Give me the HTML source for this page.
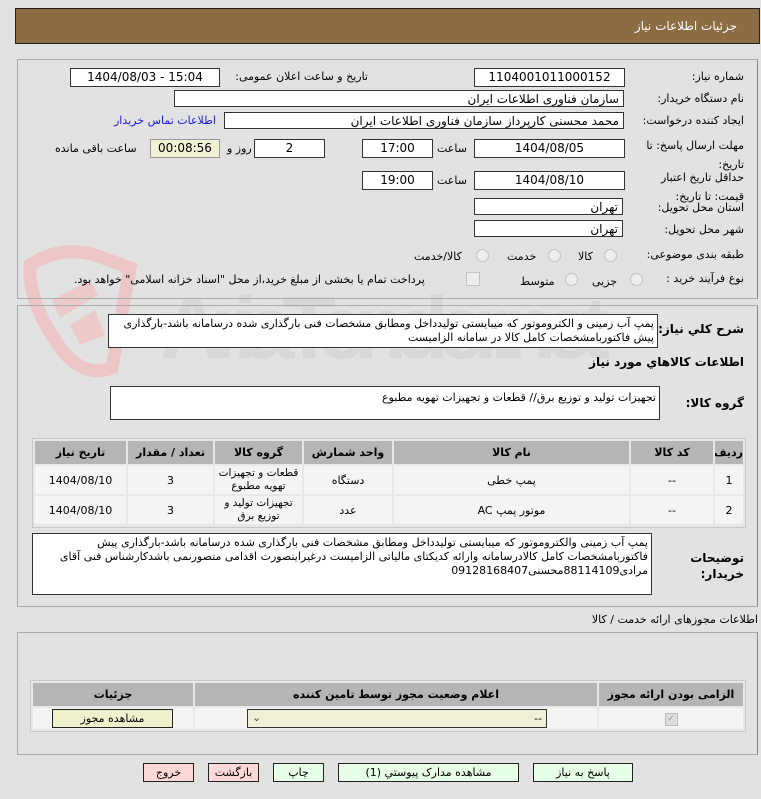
<!DOCTYPE html>
<html><head><meta charset="utf-8">
<style>
body{margin:0;width:761px;height:799px;background:#e2e2e2;font-family:Tahoma,"DejaVu Sans","Liberation Sans",sans-serif;font-size:11px;color:#000;position:relative;overflow:hidden}
.a{position:absolute}
.hdr{left:15px;top:8px;width:743px;height:34px;background:#8c6c42;border:1px solid #222;}
.hdr span{position:absolute;right:22px;top:10px;color:#fff;font-size:12px}
.pnl{border:1px solid #a9a9a9;border-right-color:#888;}
.box{background:#fff;border:1px solid #333;height:17px;line-height:17px;text-align:center;font-size:12px;overflow:hidden;white-space:nowrap}
.bl{text-align:right;padding-right:4px;box-sizing:border-box;direction:rtl}
.lbl{direction:rtl;text-align:right;white-space:nowrap}
.ta{background:#fff;border:1px solid #333;direction:rtl;text-align:right;padding:2px 3px;box-sizing:border-box;line-height:14px;font-size:11px;overflow:hidden}
.rd{width:11px;height:11px;border-radius:50%;border:1px solid #c4c4c4;background:#eee}
table{border-collapse:separate;border-spacing:2px;direction:rtl;table-layout:fixed}
td,th{text-align:center;font-size:11px;overflow:hidden;padding:0}
th{background:#b5b5b5;font-weight:bold;height:23px}
td{background:#f4f4f4}
.btn{border:1px solid #222;height:17px;line-height:17px;text-align:center;font-size:11px;direction:rtl}
</style></head><body>
<svg class="a" style="left:0;top:240px" width="640" height="150">
<path d="M30 25 Q60 5 95 15 L130 28 L112 128 Q80 140 55 100 Q28 60 30 25 Z" fill="none" stroke="#ecc6c6" stroke-width="13"/>
<path d="M52 60 L90 40 L98 55 L60 78 Z M70 85 L95 70 L105 95 L80 105 Z" fill="#eccaca"/>
<text x="160" y="118" font-family="Liberation Sans" font-weight="bold" font-size="88" fill="#cfcfcf" opacity="0.55" textLength="450">AriaTender.net</text>
</svg>

<div class="a hdr"><span>جزئیات اطلاعات نیاز</span></div>

<div class="a pnl" style="left:17px;top:59px;width:739px;height:238px"></div>
<div class="a pnl" style="left:17px;top:305px;width:739px;height:300px"></div>

<div class="a lbl" style="right:17px;top:70px">شماره نیاز:</div>
<div class="a box" style="left:474px;top:68px;width:149px">1104001011000152</div>
<div class="a lbl" style="right:393px;top:70px">تاریخ و ساعت اعلان عمومی:</div>
<div class="a box" style="left:70px;top:68px;width:148px">1404/08/03 - 15:04</div>

<div class="a lbl" style="right:17px;top:92px">نام دستگاه خریدار:</div>
<div class="a box bl" style="left:174px;top:90px;width:450px">سازمان فناوری اطلاعات ایران</div>

<div class="a lbl" style="right:17px;top:114px">ایجاد کننده درخواست:</div>
<div class="a box bl" style="left:224px;top:112px;width:400px">محمد محسنی کارپرداز سازمان فناوری اطلاعات ایران</div>
<div class="a lbl" style="left:114px;top:114px;color:#1a1ae0">اطلاعات تماس خریدار</div>

<div class="a lbl" style="right:17px;top:136px;line-height:19px">مهلت ارسال پاسخ: تا<br>تاریخ:</div>
<div class="a box" style="left:474px;top:139px;width:149px">1404/08/05</div>
<div class="a lbl" style="left:437px;top:142px">ساعت</div>
<div class="a box" style="left:362px;top:139px;width:69px">17:00</div>
<div class="a box" style="left:254px;top:139px;width:69px">2</div>
<div class="a lbl" style="left:227px;top:142px">روز و</div>
<div class="a box" style="left:150px;top:139px;width:68px;background:#f0f0d2;border-color:#999">00:08:56</div>
<div class="a lbl" style="left:55px;top:142px">ساعت باقی مانده</div>

<div class="a lbl" style="right:17px;top:168px;line-height:19px">حداقل تاریخ اعتبار<br>قیمت: تا تاریخ:</div>
<div class="a box" style="left:474px;top:171px;width:149px">1404/08/10</div>
<div class="a lbl" style="left:437px;top:174px">ساعت</div>
<div class="a box" style="left:362px;top:171px;width:69px">19:00</div>

<div class="a lbl" style="right:17px;top:201px">استان محل تحویل:</div>
<div class="a box bl" style="left:474px;top:198px;width:149px">تهران</div>
<div class="a lbl" style="right:17px;top:223px">شهر محل تحویل:</div>
<div class="a box bl" style="left:474px;top:220px;width:149px">تهران</div>

<div class="a lbl" style="right:17px;top:248px">طبقه بندی موضوعی:</div>
<div class="a rd" style="left:604px;top:249px"></div><div class="a lbl" style="left:578px;top:250px">کالا</div>
<div class="a rd" style="left:548px;top:249px"></div><div class="a lbl" style="left:507px;top:250px">خدمت</div>
<div class="a rd" style="left:476px;top:249px"></div><div class="a lbl" style="left:414px;top:250px">کالا/خدمت</div>

<div class="a lbl" style="right:17px;top:272px">نوع فرآیند خرید :</div>
<div class="a rd" style="left:630px;top:273px"></div><div class="a lbl" style="left:592px;top:275px">جزیی</div>
<div class="a rd" style="left:565px;top:273px"></div><div class="a lbl" style="left:520px;top:275px">متوسط</div>
<div class="a" style="left:466px;top:272px;width:12px;height:12px;border:1px solid #c4c4c4;background:#eee"></div>
<div class="a lbl" style="left:74px;top:273px">پرداخت تمام یا بخشی از مبلغ خرید،از محل "اسناد خزانه اسلامی" خواهد بود.</div>

<div class="a lbl" style="right:17px;top:322px;font-weight:bold;font-size:12px">شرح کلي نياز:</div>
<div class="a ta" style="left:108px;top:314px;width:550px;height:34px">پمپ آب زمینی و الکتروموتور که میبایستی تولیدداخل ومطابق مشخصات فنی بارگذاری شده درسامانه باشد-بارگذاری پیش فاکتوربامشخصات کامل کالا در سامانه الزامیست</div>

<div class="a lbl" style="right:17px;top:355px;font-weight:bold;font-size:12px">اطلاعات کالاهاي مورد نياز</div>

<div class="a lbl" style="right:17px;top:396px;font-weight:bold;font-size:12px">گروه کالا:</div>
<div class="a ta" style="left:110px;top:386px;width:550px;height:34px;padding-top:4px">تجهیزات تولید و توزیع برق//  قطعات و تجهیزات تهویه مطبوع</div>

<div class="a" style="left:32px;top:438px;width:712px;height:88px;border:1px solid #c8c8c8;background:#e8e8e8;overflow:hidden">
<table style="width:100%">
<tr><th style="width:28px">رديف</th><th style="width:82px">کد کالا</th><th>نام کالا</th><th style="width:88px">واحد شمارش</th><th style="width:87px">گروه کالا</th><th style="width:85px">تعداد / مقدار</th><th style="width:91px">تاریخ نیاز</th></tr>
<tr><td style="height:28px">1</td><td>--</td><td>پمپ خطی</td><td>دستگاه</td><td style="line-height:13px;font-size:10.5px">قطعات و تجهیزات تهویه مطبوع</td><td>3</td><td>1404/08/10</td></tr>
<tr><td style="height:28px">2</td><td>--</td><td>موتور پمپ AC</td><td>عدد</td><td style="line-height:13px;font-size:10.5px">تجهیزات تولید و توزیع برق</td><td>3</td><td>1404/08/10</td></tr>
</table></div>

<div class="a lbl" style="right:17px;top:550px;font-weight:bold;font-size:12px;line-height:16px">توضیحات<br>خریدار:</div>
<div class="a ta" style="left:32px;top:533px;width:620px;height:62px">پمپ آب زمینی والکتروموتور که میبایستی تولیدداخل ومطابق مشخصات فنی بارگذاری شده درسامانه باشد-بارگذاری پیش فاکتوربامشخصات کامل کالادرسامانه وارائه کدیکتای مالیاتی الزامیست درغیراینصورت اقدامی متصورنمی باشدکارشناس فنی آقای مرادی88114109محسنی09128168407</div>

<div class="a lbl" style="right:3px;top:613px">اطلاعات مجوزهای ارائه خدمت / کالا</div>
<div class="a pnl" style="left:17px;top:632px;width:739px;height:121px"></div>
<div class="a" style="left:30px;top:680px;width:714px;border:1px solid #c8c8c8;background:#e8e8e8">
<table style="width:100%">
<tr><th style="width:144px">الزامی بودن ارائه مجوز</th><th>اعلام وضعیت مجوز توسط تامین کننده</th><th style="width:160px">جزئیات</th></tr>
<tr><td style="height:21px"><span style="display:inline-block;width:11px;height:11px;border:1px solid #bbb;background:#ddd;color:#999;font-size:9px;line-height:11px">✓</span></td><td></td><td></td></tr>
</table></div>
<div class="a" style="left:247px;top:709px;width:298px;height:17px;background:#f0f0d8;border:1px solid #333;font-size:11px"><span style="position:absolute;right:4px;top:2px">--</span><span style="position:absolute;left:4px;top:1px;color:#444">⌄</span></div>
<div class="a btn" style="left:52px;top:709px;width:119px;background:#f0f0cc">مشاهده مجوز</div>

<div class="a btn" style="left:533px;top:763px;width:98px;background:#e6fde6">پاسخ به نیاز</div>
<div class="a btn" style="left:338px;top:763px;width:179px;background:#e6fde6">مشاهده مدارک پیوستي (1)</div>
<div class="a btn" style="left:273px;top:763px;width:49px;background:#e6fde6">چاپ</div>
<div class="a btn" style="left:208px;top:763px;width:49px;background:#ffd8d8">بازگشت</div>
<div class="a btn" style="left:143px;top:763px;width:49px;background:#ffd8d8">خروج</div>
</body></html>
